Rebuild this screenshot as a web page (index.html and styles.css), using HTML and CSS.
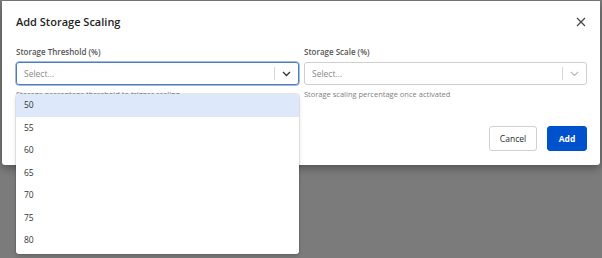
FILE: index.html
```html
<!DOCTYPE html>
<html lang="en">
<head>
    <meta charset="UTF-8">
    <meta name="viewport" content="width=device-width, initial-scale=1.0">
    <title>Add Storage Scaling</title>
    <link rel="stylesheet" href="styles.css">
</head>
<body>
    <div class="modal">
        <div class="modal-header">
            <h1 class="modal-title">Add Storage Scaling</h1>
            <button class="close-btn" aria-label="Close">
                <svg width="10" height="10" viewBox="0 0 10 10">
                    <path d="M1 1 L9 9 M9 1 L1 9" stroke="#444" stroke-width="1.2" fill="none"/>
                </svg>
            </button>
        </div>

        <div class="form-row">
            <div class="form-group">
                <label>Storage Threshold (%)</label>
                <div class="select-wrap">
                    <div class="select focused">
                        <span class="placeholder">Select...</span>
                        <span class="indicator">
                            <span class="sep"></span>
                            <svg width="9" height="6" viewBox="0 0 9 6">
                                <path d="M1 1 L4.5 4.5 L8 1" stroke="#333" stroke-width="1.3" fill="none"/>
                            </svg>
                        </span>
                    </div>
                    <ul class="menu">
                        <li class="active">50</li>
                        <li>55</li>
                        <li>60</li>
                        <li>65</li>
                        <li>70</li>
                        <li>75</li>
                        <li>80</li>
                    </ul>
                </div>
                <p class="help">Storage percentage threshold to trigger scaling</p>
            </div>

            <div class="form-group">
                <label>Storage Scale (%)</label>
                <div class="select-wrap">
                    <div class="select">
                        <span class="placeholder">Select...</span>
                        <span class="indicator">
                            <span class="sep"></span>
                            <svg width="9" height="6" viewBox="0 0 9 6">
                                <path d="M1 1 L4.5 4.5 L8 1" stroke="#bbb" stroke-width="1.2" fill="none"/>
                            </svg>
                        </span>
                    </div>
                </div>
                <p class="help">Storage scaling percentage once activated</p>
            </div>
        </div>

        <div class="modal-footer">
            <button class="btn btn-cancel">Cancel</button>
            <button class="btn btn-add">Add</button>
        </div>
    </div>
</body>
</html>
```

FILE: styles.css
```css
* {
    margin: 0;
    padding: 0;
    box-sizing: border-box;
    font-family: 'Open Sans', 'Noto Sans', sans-serif;
}

body {
    background: #7b7b7b;
    height: 258px;
    overflow: hidden;
    padding-top: 1px;
}

.modal {
    background: #fff;
    margin: 0 2px;
    height: 164px;
    padding: 12px 13px 14px 14px;
    border-radius: 0 0 3px 3px;
    box-shadow: 0 3px 8px rgba(0, 0, 0, 0.35);
    display: flex;
    flex-direction: column;
}

.modal-header {
    display: flex;
    justify-content: space-between;
    align-items: center;
    height: 18px;
}

.modal-title {
    font-size: 11px;
    font-weight: 600;
    color: #1f1f1f;
    line-height: 18px;
}

.close-btn {
    background: none;
    border: none;
    width: 16px;
    height: 16px;
    display: flex;
    align-items: center;
    justify-content: center;
    margin-right: -2px;
}

.form-row {
    display: grid;
    grid-template-columns: 283px 283px;
    gap: 5px;
    margin-top: 15px;
}

.form-group label {
    display: block;
    font-size: 8px;
    font-weight: 600;
    color: #555;
    line-height: 12px;
    margin-bottom: 4px;
}

.select-wrap {
    position: relative;
}

.select {
    height: 23px;
    border: 1px solid #cfcfcf;
    border-radius: 3px;
    display: flex;
    align-items: center;
    justify-content: space-between;
    padding-left: 7px;
}

.select.focused {
    border-color: #4a7cc0;
    box-shadow: 0 0 0 0.5px #4a7cc0;
}

.placeholder {
    font-size: 8.5px;
    color: #8a8a8a;
}

.indicator {
    display: flex;
    align-items: center;
    height: 100%;
}

.sep {
    width: 1px;
    height: 13px;
    background: #d6d6d6;
    margin-right: 7px;
}

.indicator svg {
    margin-right: 7px;
}

.help {
    font-size: 7.5px;
    color: #808080;
    line-height: 10px;
    margin-top: 4px;
}

.menu {
    position: absolute;
    top: 32px;
    left: 0;
    right: 0;
    list-style: none;
    background: #fff;
    border-radius: 3px;
    padding-bottom: 2px;
    box-shadow: 0 0 0 1px rgba(0, 0, 0, 0.08), 0 2px 4px rgba(0, 0, 0, 0.15);
    z-index: 10;
}

.menu li {
    height: 22.5px;
    line-height: 22.5px;
    padding-left: 8px;
    font-size: 8.5px;
    color: #333;
}

.menu li.active {
    background: #dde9fb;
    border-radius: 3px 3px 0 0;
}

.modal-footer {
    display: flex;
    justify-content: flex-end;
    gap: 10px;
    margin-top: auto;
}

.btn {
    height: 25px;
    border-radius: 3px;
    font-size: 8.5px;
    cursor: pointer;
}

.btn-cancel {
    width: 48px;
    background: #fff;
    border: 1px solid #d0d0d0;
    color: #2a2a2a;
}

.btn-add {
    width: 40px;
    background: #0052cc;
    border: 1px solid #0052cc;
    color: #fff;
    font-weight: 700;
}
```
